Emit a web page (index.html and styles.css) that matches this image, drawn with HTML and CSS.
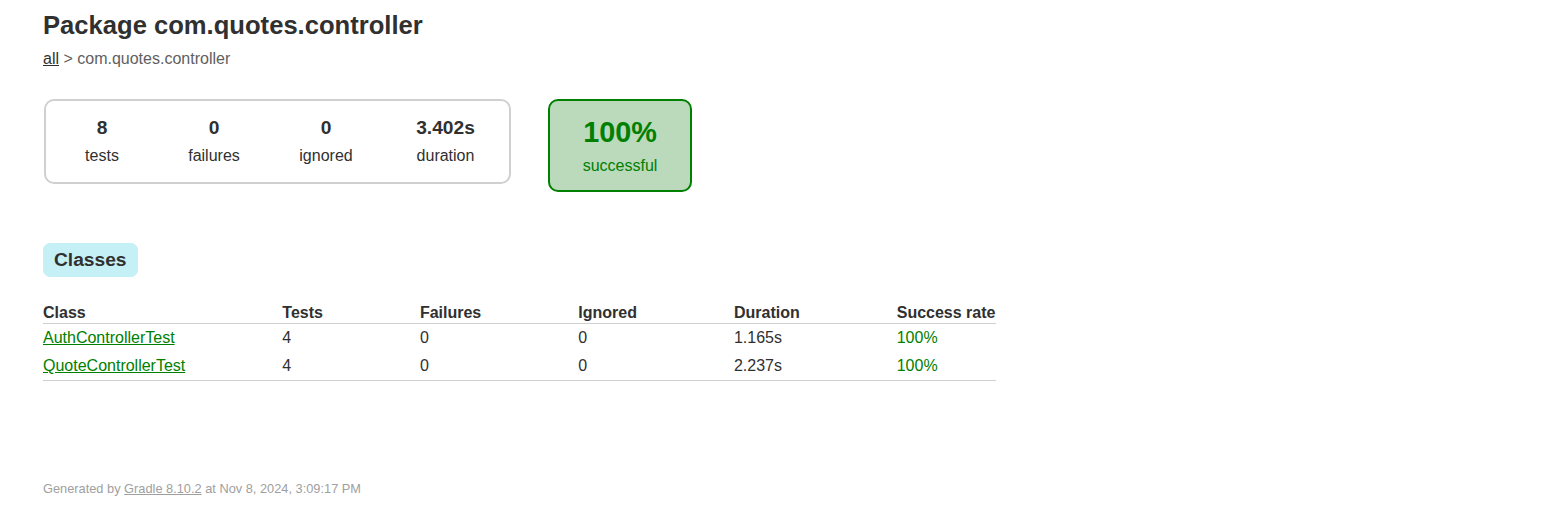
FILE: index.html
```html
<!DOCTYPE html>
<html lang="en">
<head>
<meta charset="UTF-8">
<title>Test results - Package com.quotes.controller</title>
<link rel="stylesheet" href="styles.css">
</head>
<body>
<div class="content">
  <h1 class="title">Package com.quotes.controller</h1>
  <div class="breadcrumbs"><a class="crumb-link" href="#">all</a> &gt; com.quotes.controller</div>

  <div class="summary">
    <div class="summary-group">
      <div class="info-box">
        <div class="counter">8</div>
        <p class="label">tests</p>
      </div>
      <div class="info-box">
        <div class="counter">0</div>
        <p class="label">failures</p>
      </div>
      <div class="info-box">
        <div class="counter">0</div>
        <p class="label">ignored</p>
      </div>
      <div class="info-box info-box-wide">
        <div class="counter">3.402s</div>
        <p class="label">duration</p>
      </div>
    </div>
    <div class="success-rate">
      <div class="percent">100%</div>
      <p class="label">successful</p>
    </div>
  </div>

  <ul class="tab-links">
    <li class="tab-link selected"><h2 class="tab-title">Classes</h2></li>
  </ul>

  <div class="tab">
    <table class="classes-table">
      <thead>
        <tr>
          <th>Class</th>
          <th>Tests</th>
          <th>Failures</th>
          <th>Ignored</th>
          <th>Duration</th>
          <th>Success rate</th>
        </tr>
      </thead>
      <tbody>
        <tr>
          <td class="success"><a href="#">AuthControllerTest</a></td>
          <td>4</td>
          <td>0</td>
          <td>0</td>
          <td>1.165s</td>
          <td class="success">100%</td>
        </tr>
        <tr>
          <td class="success"><a href="#">QuoteControllerTest</a></td>
          <td>4</td>
          <td>0</td>
          <td>0</td>
          <td>2.237s</td>
          <td class="success">100%</td>
        </tr>
      </tbody>
    </table>
  </div>

  <div class="footer">
    <p class="footer-text">Generated by <a href="#">Gradle 8.10.2</a> at Nov 8, 2024, 3:09:17 PM</p>
  </div>
</div>
</body>
</html>
```

FILE: styles.css
```css
html, body {
  margin: 0;
  padding: 0;
  background: #ffffff;
}

body {
  font-family: "Liberation Sans", Arial, sans-serif;
  font-size: 16px;
  color: #303030;
}

a {
  color: #303030;
}

.content {
  padding: 11px 43px 30px 43px;
}

.title {
  font-size: 25.6px;
  font-weight: bold;
  margin: 0 0 10px 0;
  white-space: nowrap;
}

.breadcrumbs {
  color: #606060;
}

.breadcrumbs .crumb-link {
  color: #303030;
}

.summary {
  display: flex;
  align-items: flex-start;
  margin-top: 31px;
}

.summary-group {
  display: flex;
  margin-left: 1px;
  border: solid 2px #d0d0d0;
  border-radius: 10px;
}

.info-box {
  width: 112px;
  padding: 16px 0 17px 0;
  text-align: center;
}

.info-box-wide {
  width: 127px;
}

.label {
  margin: 0;
}

.counter {
  font-size: 19.2px;
  font-weight: bold;
  margin-bottom: 8px;
}

.success-rate {
  width: 140px;
  margin-left: 37px;
  padding: 15px 0;
  text-align: center;
  border: solid 2px #008000;
  border-radius: 10px;
  background-color: #bbd9bb;
  color: #008000;
}

.percent {
  font-size: 28.8px;
  font-weight: bold;
  line-height: 33px;
  margin-bottom: 8px;
}

.tab-links {
  list-style: none;
  display: flex;
  margin: 41px 0 16px 0;
  padding: 10px 0;
}

.tab-link {
  padding: 5px 10px;
  border-radius: 7px;
  border: solid 1px #d4d4d4;
  background-color: #f0f0f0;
}

.tab-link.selected {
  background-color: #c5f0f5;
  border-color: #c5f0f5;
}

.tab-title {
  margin: 0;
  font-size: 19.2px;
  font-weight: bold;
  white-space: nowrap;
}

.classes-table {
  border-collapse: collapse;
  border-bottom: solid 1px #d0d0d0;
}

.classes-table th {
  text-align: left;
  white-space: nowrap;
  padding: 1px 1px 1px 96px;
  border-bottom: solid 1px #d0d0d0;
  font-weight: bold;
}

.classes-table td {
  white-space: nowrap;
  padding: 5px 1px 5px 96px;
}

.classes-table th:first-child,
.classes-table td:first-child {
  padding-left: 0;
}

.success,
.success a {
  color: #008000;
}

.footer {
  margin-top: 100px;
  font-size: 12.8px;
  white-space: nowrap;
  color: #a0a0a0;
}

.footer a {
  color: #a0a0a0;
}

.footer-text {
  margin: 0;
}
```
